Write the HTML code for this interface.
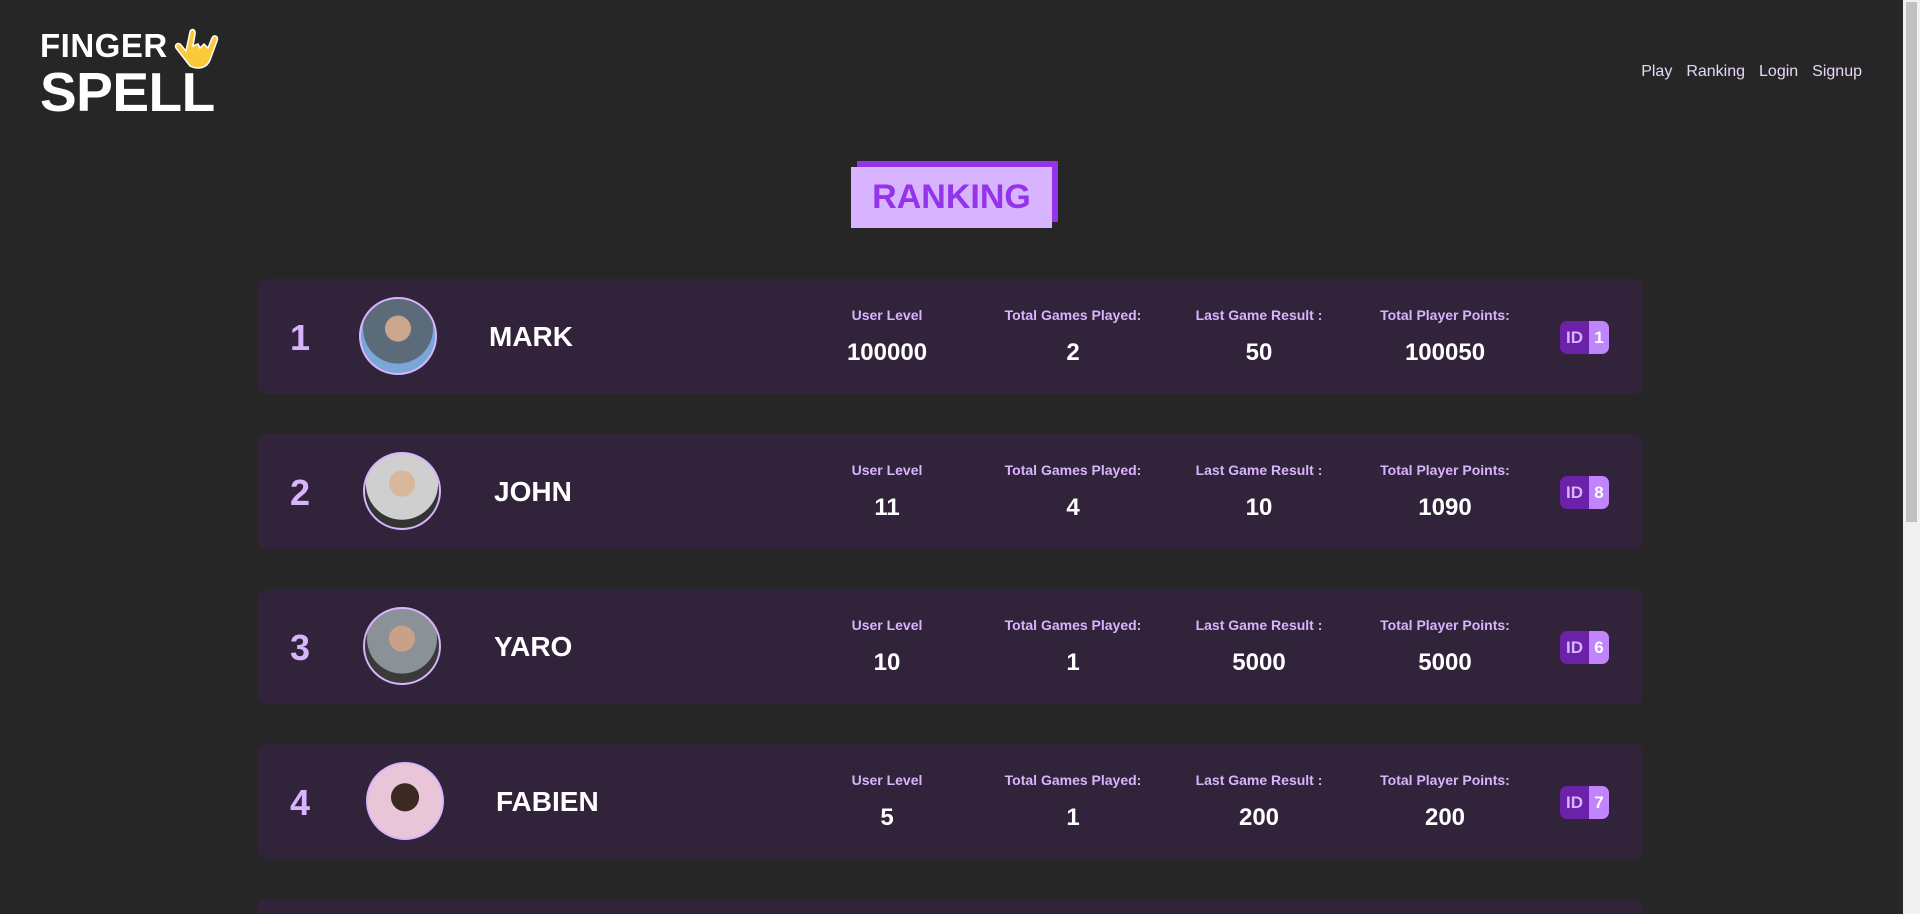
<!DOCTYPE html>
<html><head><style>
*{margin:0;padding:0;box-sizing:border-box}
html,body{width:1920px;height:914px;overflow:hidden}
body{background:#262626;font-family:"Liberation Sans",sans-serif;position:relative}
.logo{position:absolute;left:40px;top:28px;color:#fff;font-weight:bold}
.logo .f{font-size:33px;letter-spacing:0.5px;line-height:36px}
.logo .s{font-size:55px;line-height:56px;letter-spacing:-0.5px}
nav{position:absolute;right:58px;top:63px;font-size:16px;color:#e5d8f5;word-spacing:0}
nav span{margin-left:14px}
.title{position:absolute;left:851px;top:167px;width:201px;height:61px;background:#d8b4fe;box-shadow:6px -6px 0 #9333ea;color:#9333ea;font-weight:bold;font-size:34px;text-align:center;line-height:61px}
.card{position:absolute;left:258px;width:1385px;height:115px;background:#31233a;border-radius:8px}
.rank{position:absolute;left:285px;width:30px;text-align:center;color:#d8b4fe;font-weight:bold;font-size:36px;line-height:118px}
.av{position:absolute;left:359px;top:18px;width:78px;height:78px;border-radius:50%;border:2px solid #d8b4fe;background:radial-gradient(circle at 50% 40%,#c9a68c 0 22%,#5b6b7a 23% 60%,#7aa7d8 61%)}
.name{position:absolute;left:489px;color:#fff;font-weight:bold;font-size:28px;line-height:115px}
.col{position:absolute;width:180px;text-align:center;top:28px}
.col .l{color:#d8b4fe;font-weight:bold;font-size:14px}
.col .v{color:#fff;font-weight:bold;font-size:24px;margin-top:16px}
.id{position:absolute;left:1302px;top:42px;width:49px;height:33px;border-radius:7px;overflow:hidden;display:flex;font-weight:bold;font-size:17px;line-height:33px}
.id b{background:#6b21a8;color:#d8b4fe;width:29px;text-align:center}
.id i{font-style:normal;background:#c084fc;color:#fff;flex:1;text-align:center}
.sb{position:absolute;right:0;top:0;width:17px;height:914px;background:#f1f1f1}
.sb div{position:absolute;left:3px;top:2px;width:11px;height:520px;background:#c1c1c1}
</style></head><body>
<div class="logo"><div class="f">FINGER</div><div class="s">SPELL</div>
<svg style="position:absolute;left:130px;top:-2px" width="52" height="48" viewBox="0 0 52 48"><path d="M6 22 C4 18 9 16 11 19 L16 25 L20 6 C21 2 26 3 25 8 L23 20 L28 18 L30 22 L34 18 L38 22 L42 12 C44 8 49 10 47 15 L40 34 C37 42 28 44 20 40 Z" fill="#fcc93a" stroke="#fff" stroke-width="1.5"/></svg></div>
<nav><span>Play</span><span>Ranking</span><span>Login</span><span>Signup</span></nav>
<div class="title">RANKING</div>

<div class="card" style="top:279px">
<div class="rank" style="left:27px">1</div><div class="av" style="left:101px"></div><div class="name" style="left:231px">MARK</div>
<div class="col" style="left:539px"><div class="l">User Level</div><div class="v">100000</div></div>
<div class="col" style="left:725px"><div class="l">Total Games Played:</div><div class="v">2</div></div>
<div class="col" style="left:911px"><div class="l">Last Game Result :</div><div class="v">50</div></div>
<div class="col" style="left:1097px"><div class="l">Total Player Points:</div><div class="v">100050</div></div>
<div class="id"><b>ID</b><i>1</i></div></div>

<div class="card" style="top:434px">
<div class="rank" style="left:27px">2</div><div class="av" style="left:105px;background:radial-gradient(circle at 50% 40%,#d9b79a 0 22%,#cfcfcf 23% 62%,#333 63%)"></div><div class="name" style="left:236px">JOHN</div>
<div class="col" style="left:539px"><div class="l">User Level</div><div class="v">11</div></div>
<div class="col" style="left:725px"><div class="l">Total Games Played:</div><div class="v">4</div></div>
<div class="col" style="left:911px"><div class="l">Last Game Result :</div><div class="v">10</div></div>
<div class="col" style="left:1097px"><div class="l">Total Player Points:</div><div class="v">1090</div></div>
<div class="id"><b>ID</b><i>8</i></div></div>

<div class="card" style="top:589px">
<div class="rank" style="left:27px">3</div><div class="av" style="left:105px;background:radial-gradient(circle at 50% 40%,#c9a08a 0 22%,#8a9298 23% 60%,#3a3a3a 61%)"></div><div class="name" style="left:236px">YARO</div>
<div class="col" style="left:539px"><div class="l">User Level</div><div class="v">10</div></div>
<div class="col" style="left:725px"><div class="l">Total Games Played:</div><div class="v">1</div></div>
<div class="col" style="left:911px"><div class="l">Last Game Result :</div><div class="v">5000</div></div>
<div class="col" style="left:1097px"><div class="l">Total Player Points:</div><div class="v">5000</div></div>
<div class="id"><b>ID</b><i>6</i></div></div>

<div class="card" style="top:744px">
<div class="rank" style="left:27px">4</div><div class="av" style="left:108px;background:radial-gradient(circle at 50% 45%,#3b2a22 0 25%,#e8c6d8 26%)"></div><div class="name" style="left:238px">FABIEN</div>
<div class="col" style="left:539px"><div class="l">User Level</div><div class="v">5</div></div>
<div class="col" style="left:725px"><div class="l">Total Games Played:</div><div class="v">1</div></div>
<div class="col" style="left:911px"><div class="l">Last Game Result :</div><div class="v">200</div></div>
<div class="col" style="left:1097px"><div class="l">Total Player Points:</div><div class="v">200</div></div>
<div class="id"><b>ID</b><i>7</i></div></div>

<div class="card" style="top:899px;height:15px;border-radius:8px 8px 0 0"></div>
<div class="sb"><div></div></div>
</body></html>
